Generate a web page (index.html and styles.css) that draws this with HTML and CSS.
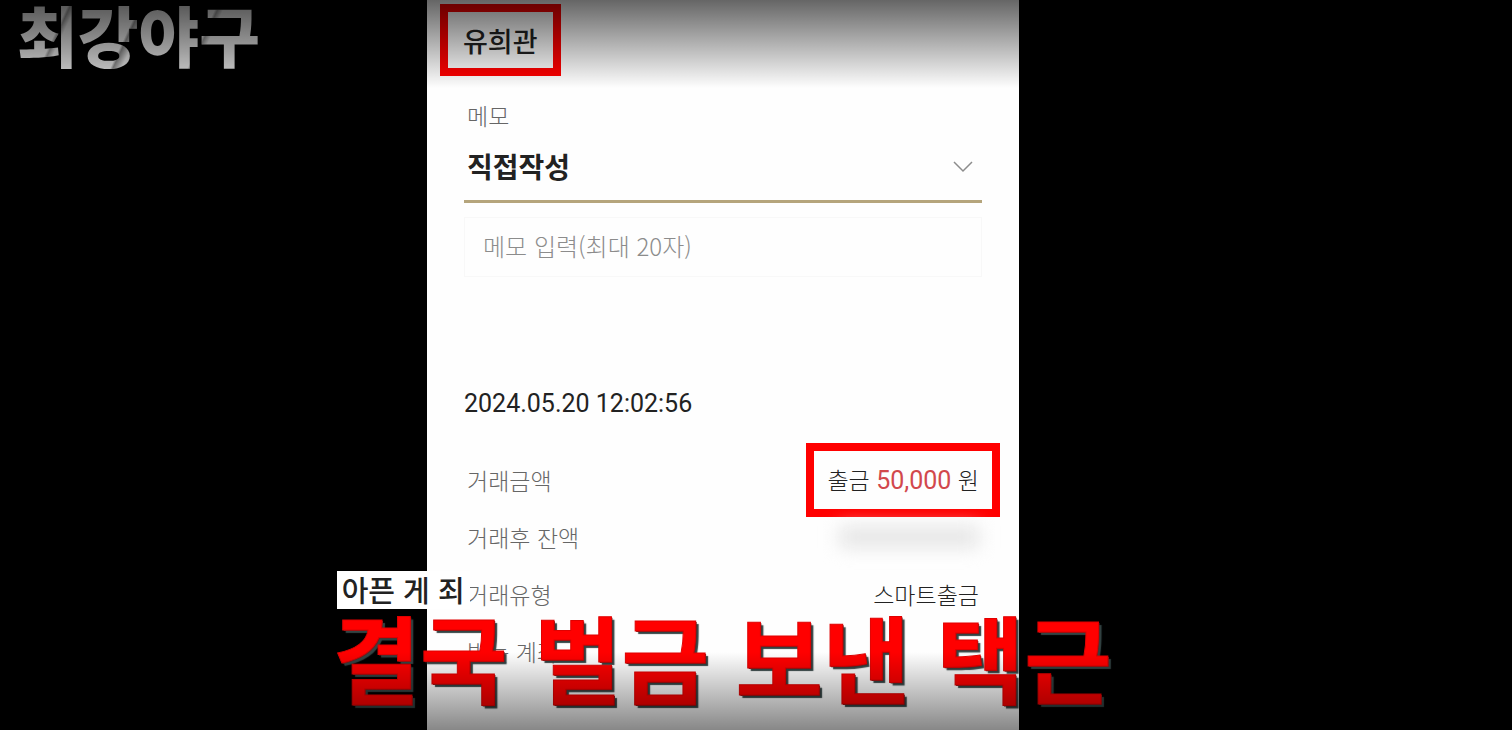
FILE: index.html
```html
<!DOCTYPE html>
<html lang="ko">
	<head>
		<meta charset="utf-8">
		<title>최강야구</title>
		<link rel="stylesheet" href="styles.css">
	</head>
	<body>
	<div class="stage">
		<form class="panel">
			<h1 class="name">유희관</h1>
			<label class="label" for="memoType">메모</label>
			<div class="select">
				<select id="memoType" name="memoType">
					<option>직접작성</option>
				</select>
				<svg class="arrow" width="22" height="14" viewBox="0 0 22 14"><path d="M2 2 L11 11 L20 2" fill="none" stroke="#8c8c8c" stroke-width="1.5"/></svg>
			</div>
			<input class="memo" type="text" name="memo" aria-label="메모 입력" placeholder="메모 입력(최대 20자)">
			<p class="date">2024.05.20 12:02:56</p>
			<dl class="detail">
				<div class="row"><dt>거래금액</dt><dd class="amount">출금 <span class="money">50,000</span> 원</dd></div>
				<div class="row"><dt>거래후 잔액</dt><dd class="hidden"></dd></div>
				<div class="row"><dt>거래유형</dt><dd>스마트출금</dd></div>
				<div class="row"><dt>받는 계좌</dt><dd></dd></div>
			</dl>
		</form>
		<div class="logo">최강야구</div>
		<div class="caption">
			<p class="small">아픈 게 죄</p>
			<p class="big">결국 벌금 보낸 택근</p>
		</div>
		<div class="shade"></div>
	</div>
	</body>
</html>
```
FILE: styles.css
```css
body {
	margin: 0;
	background-color: #000;
	font-family: "Noto Sans CJK KR", sans-serif;
}
h1, p, dl, dd {
	margin: 0;
}
.stage {
	position: relative;
	display: grid;
	grid-template-columns: 427fr 592fr 493fr;
	min-height: 100vh;
	overflow: hidden;
}
.panel {
	grid-column: 2;
	display: flex;
	flex-direction: column;
	padding: 4px 37px 0;
	background-color: #fefefe;
	color: #222;
}
.name {
	align-self: flex-start;
	margin-left: -24px;
	padding: 11px 15px 9px;
	border: 8px solid #f00;
	font-size: 27px;
	font-weight: 500;
	line-height: 36px;
}
.label {
	margin-top: 22px;
	padding-left: 3px;
	font-size: 23px;
	font-weight: 300;
	line-height: 34px;
	color: #666;
}
.select {
	position: relative;
}
.select select {
	display: block;
	width: 100%;
	height: 71px;
	padding: 0 3px;
	border: 0;
	border-bottom: 3px solid #b5a57c;
	border-radius: 0;
	background-color: transparent;
	appearance: none;
	font-family: inherit;
	font-size: 28px;
	font-weight: 700;
	color: #222;
}
.arrow {
	position: absolute;
	right: 8px;
	top: 28px;
	pointer-events: none;
}
.memo {
	box-sizing: border-box;
	width: 100%;
	height: 60px;
	margin-top: 14px;
	padding: 0 18px 4px;
	border: 1px solid #f8f8f8;
	background-color: transparent;
	font-family: inherit;
	font-size: 24px;
	font-weight: 300;
}
.memo::placeholder {
	color: #8c8c8c;
}
.date {
	margin-top: 110px;
	font-family: Roboto, sans-serif;
	font-size: 25px;
	line-height: 34px;
}
.detail {
	margin-top: 30px;
	font-size: 23px;
	font-weight: 300;
	line-height: 32px;
}
.row {
	display: flex;
	justify-content: space-between;
	align-items: center;
	height: 57px;
	padding: 0 3px;
}
.row dt {
	color: #666;
}
/* red marker frame round the amount */
.amount {
	padding: 0 1px;
	margin-right: -1px;
	outline: 8px solid #f00;
	outline-offset: 12px;
}
.money {
	font-family: Roboto, sans-serif;
	font-size: 25px;
	font-weight: 400;
	color: #d2484c;
}
.hidden {
	width: 140px;
	height: 22px;
	background-color: #e6e6e6;
	filter: blur(9px);
}
.logo {
	position: absolute;
	left: 13px;
	top: 0;
	padding: 0 4px 10px;
	font-size: 66px;
	font-weight: 900;
	line-height: 66px;
	color: transparent;
	background: linear-gradient(115deg, transparent 20%, #0005 21%, transparent 23%, transparent 45%, #0006 46%, transparent 49%, transparent 72%, #0005 73%, transparent 75%), linear-gradient(#ccc, #d8d8d8);
	-webkit-background-clip: text;
	background-clip: text;
}
.caption {
	position: absolute;
	left: 22%;
	top: 571px;
	white-space: nowrap;
}
.small {
	display: inline-block;
	margin-left: 4px;
	padding: 0 5px 2px;
	background-color: #fff;
	font-size: 29px;
	font-weight: 500;
	line-height: 36px;
	color: #222;
}
.big {
	font-size: 95px;
	font-weight: 700;
	line-height: 94px;
	color: #f00;
	-webkit-text-stroke: 1px #e00000;
	text-shadow: 1px 1px 0 #622, 3px 3px 1px #344;
}
.shade {
	position: absolute;
	inset: 0;
	background: linear-gradient(#0009, transparent 88px), linear-gradient(to top, #0007, transparent 78px);
	pointer-events: none;
}
```
